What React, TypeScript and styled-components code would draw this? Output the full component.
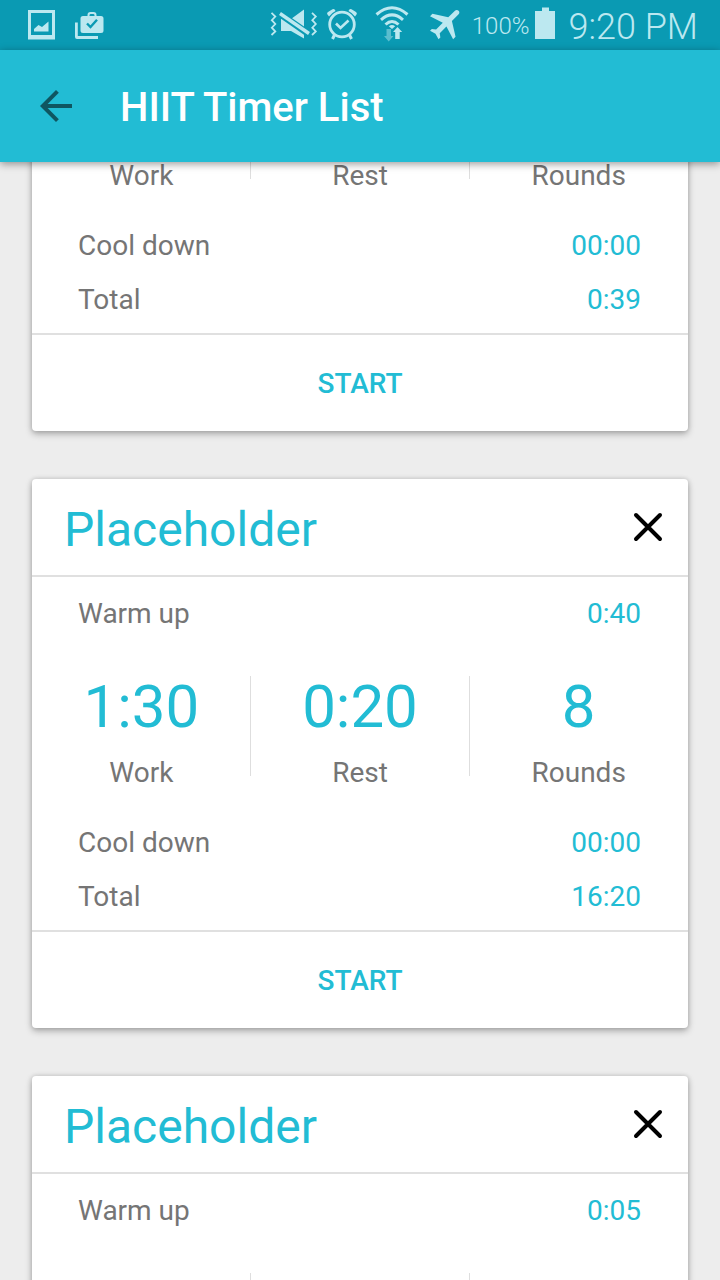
import React, { useLayoutEffect, useRef } from 'react';
import styled, { createGlobalStyle } from 'styled-components';

const accent = '#22bcd4';
const statusBg = '#0a9ab3';
const statusInk = '#bce8f0';

const GlobalStyle = createGlobalStyle`
  *, *::before, *::after { box-sizing: border-box; }
  body {
    margin: 0;
    background: #ededed;
    font-family: Roboto, "Liberation Sans", sans-serif;
  }
  h1, h2, dl, dd { margin: 0; }
  button {
    margin: 0;
    padding: 0;
    border: 0;
    background: none;
    font: inherit;
    cursor: pointer;
  }
`;

const Screen = styled.div`
  display: flex;
  flex-direction: column;
  height: 100vh;
`;

const StatusBar = styled.div`
  flex: none;
  display: flex;
  justify-content: space-between;
  height: 50px;
  padding: 0 22px 0 28px;
  background: ${statusBg};
  color: ${statusInk};
`;

const StatusGroup = styled.div<{ $gap: number }>`
  display: flex;
  align-items: center;
  gap: ${(p) => p.$gap}px;
`;

const StatusIcon = styled.svg`
  flex: none;
  display: block;
  fill: currentColor;
`;

const BatteryLevel = styled.span`
  font-size: 24px;
  font-weight: 300;
  line-height: 28px;
  padding-top: 2px;
`;

const Clock = styled.span`
  font-size: 36px;
  font-weight: 300;
  line-height: 42px;
  padding-top: 3px;
`;

const AppBar = styled.header`
  flex: none;
  display: flex;
  align-items: center;
  gap: 40px;
  height: 112px;
  padding: 0 32px;
  background: ${accent};
  box-shadow: 0 2px 8px rgba(0, 0, 0, 0.4);
  z-index: 1;
`;

const IconButton = styled.button<{ $color: string }>`
  flex: none;
  width: 48px;
  height: 48px;
  color: ${(p) => p.$color};

  svg {
    display: block;
    fill: currentColor;
  }
`;

const AppTitle = styled.h1`
  padding-top: 4px;
  color: #fff;
  font-size: 40px;
  font-weight: 500;
  line-height: 48px;
`;

const TimerList = styled.main`
  flex: 1;
  min-height: 0;
  display: flex;
  flex-direction: column;
  gap: 48px;
  padding: 32px;
  overflow-y: auto;
  scrollbar-width: none;
`;

const Card = styled.article`
  flex: none;
  border-radius: 4px;
  background: #fff;
  box-shadow: 0 3px 7px rgba(0, 0, 0, 0.28), 0 0 5px rgba(0, 0, 0, 0.14);
`;

const CardHeader = styled.div`
  display: flex;
  align-items: center;
  justify-content: space-between;
  height: 98px;
  padding: 0 16px 0 32px;
  border-bottom: 2px solid #e0e0e0;
`;

const CardTitle = styled.h2`
  padding-top: 6px;
  color: ${accent};
  font-size: 48px;
  font-weight: 400;
  line-height: 56px;
`;

const CardBody = styled.div`
  padding: 10px 0 6px;
`;

const Row = styled.dl`
  display: flex;
  justify-content: space-between;
  padding: 0 47px 0 46px;
  font-size: 28px;
  line-height: 54px;
`;

const Label = styled.dt`
  color: #757575;
`;

const Value = styled.dd`
  color: ${accent};
`;

const Stats = styled.dl`
  display: grid;
  grid-template-columns: repeat(3, 1fr);
  margin: 35px 0 27px;
  background:
    linear-gradient(#dedede, #dedede) 33.333% 0 / 1px 100px no-repeat,
    linear-gradient(#dedede, #dedede) 66.667% 0 / 1px 100px no-repeat;
`;

const Stat = styled.div`
  display: flex;
  flex-direction: column-reverse;
  align-items: center;
  gap: 19px;
  font-size: 28px;
  line-height: 32px;
`;

const StatValue = styled(Value)`
  font-size: 60px;
  line-height: 62px;
`;

const StartButton = styled.button`
  display: block;
  width: 100%;
  height: 98px;
  padding-top: 2px;
  border-top: 2px solid #e0e0e0;
  color: ${accent};
  font-size: 28px;
  font-weight: 500;
  line-height: 32px;
`;

interface Timer {
  id: number;
  name: string;
  warmUp: string;
  work: string;
  rest: string;
  rounds: string;
  coolDown: string;
  total: string;
}

const timers: Timer[] = [
  { id: 1, name: 'Placeholder', warmUp: '0:05', work: '0:10', rest: '0:07', rounds: '2', coolDown: '00:00', total: '0:39' },
  { id: 2, name: 'Placeholder', warmUp: '0:40', work: '1:30', rest: '0:20', rounds: '8', coolDown: '00:00', total: '16:20' },
  { id: 3, name: 'Placeholder', warmUp: '0:05', work: '0:20', rest: '0:10', rounds: '8', coolDown: '00:00', total: '4:05' },
];

const PhotoIcon = () => (
  <StatusIcon width="28" height="50" viewBox="0 0 28 50" aria-hidden="true">
    <path fillRule="evenodd" d="M0 10H27V39.500H0ZM3 13V35H24V13Z" />
    <path d="M6 31.500V29L10.500 25L14 27L20.500 21.500V31.500Z" />
  </StatusIcon>
);

const ShopIcon = () => (
  <StatusIcon width="30" height="50" viewBox="0 0 30 50" aria-hidden="true">
    <path d="M0 22.500H2.800V36H23V39H2Q0 39 0 37Z" />
    <path
      fillRule="evenodd"
      d="M8 16H12.500V15Q12.500 12 15.500 12H18.500Q21.500 12 21.500 15V16H26Q28.500 16 28.500 18.500V30.500Q28.500 33 26 33H8Q5.500 33 5.500 30.500V18.500Q5.500 16 8 16ZM14.500 16H19.500V15.200Q19.500 14 18.200 14H15.800Q14.500 14 14.500 15.200Z"
    />
    <path d="M12 23.500L15.500 27L22 19.800" fill="none" stroke={statusBg} strokeWidth="2.400" />
  </StatusIcon>
);

const MuteIcon = () => (
  <StatusIcon width="51" height="50" viewBox="0 0 51 50" aria-hidden="true">
    <path d="M11 19H21L34 9.500V38.500L21 31H11Z" />
    <path d="M8 12.500L41 35.500" stroke={statusBg} strokeWidth="7" />
    <path d="M10 13.500L39 33.500" stroke="currentColor" strokeWidth="3.400" />
    <g fill="none" stroke="currentColor" strokeWidth="1.800">
      <path d="M1.500 12.800L5.300 16.500L1.800 20.200L5.300 24L1.800 27.700L5.300 31.500L1.500 35" />
      <path d="M42 12.800L45.800 16.500L42.300 20.200L45.800 24L42.300 27.700L45.800 31.500L42 35" />
    </g>
  </StatusIcon>
);

const AlarmIcon = () => (
  <StatusIcon width="35" height="50" viewBox="0 0 35 50" aria-hidden="true">
    <g fill="none" stroke="currentColor">
      <circle cx="15" cy="24.500" r="12.300" strokeWidth="2.800" />
      <path d="M9 23.500L13.500 28L21.500 20.500" strokeWidth="2.600" />
      <path d="M7.500 35L5.500 39M22.500 35L24.500 39" strokeWidth="3" />
    </g>
    <path d="M0.500 14.500Q-0.500 13 1 12L5.500 9.300Q7 8.500 8 10L8.500 11Q4.500 13 2 16.500Z" />
    <path d="M29.500 14.500Q30.500 13 29 12L24.500 9.300Q23 8.500 22 10L21.500 11Q25.500 13 28 16.500Z" />
  </StatusIcon>
);

const WifiIcon = () => (
  <StatusIcon width="48" height="50" viewBox="0 0 48 50" aria-hidden="true">
    <g fill="none" stroke="currentColor" strokeWidth="3">
      <path d="M8.500 14.500Q24 1 39.500 14.500" />
      <path d="M13 19.800Q24 10 35 19.800" />
      <path d="M17.500 24.500Q24 18.500 30.500 24.500" />
    </g>
    <path d="M20.800 26.200Q24 24 27.200 26.200L24 29Z" />
    <path d="M18.500 29H23V36H25.500L20.700 41.500L16 36H18.500Z" opacity="0.450" />
    <path d="M29.500 27L34.200 32H31.700V39H27.200V32H25Z" />
  </StatusIcon>
);

const PlaneIcon = () => (
  <StatusIcon width="44" height="50" viewBox="0 0 44 50" aria-hidden="true">
    <path
      transform="translate(4.400 2.800) scale(1.720) rotate(45 12 12)"
      d="M21 16v-2l-8-5V3.500c0-.83-.67-1.500-1.500-1.500S10 2.670 10 3.500V9l-8 5v2l8-2.500V19l-2 1.500V22l3.500-1 3.500 1v-1.500L13 19v-5.500l8 2.500z"
    />
  </StatusIcon>
);

const BatteryIcon = () => (
  <StatusIcon width="27" height="50" viewBox="0 0 27 50" aria-hidden="true">
    <path d="M7 7.500H14V11H20V39H0V11H7Z" />
  </StatusIcon>
);

const BackIcon = () => (
  <svg width="48" height="48" viewBox="0 0 24 24" aria-hidden="true">
    <path d="M20 11H7.830l5.590-5.590L12 4l-8 8 8 8 1.410-1.410L7.830 13H20v-2z" />
  </svg>
);

const CloseIcon = () => (
  <svg width="48" height="48" viewBox="0 0 48 48" aria-hidden="true">
    <path d="M12 12L36 36M36 12L12 36" stroke="currentColor" strokeWidth="4" strokeLinecap="round" />
  </svg>
);

const DataRow = ({ label, value }: { label: string; value: string }) => (
  <Row>
    <Label>{label}</Label>
    <Value>{value}</Value>
  </Row>
);

const StatCell = ({ label, value }: { label: string; value: string }) => (
  <Stat>
    <Label>{label}</Label>
    <StatValue>{value}</StatValue>
  </Stat>
);

const TimerCard = ({ timer }: { timer: Timer }) => (
  <Card>
    <CardHeader>
      <CardTitle>{timer.name}</CardTitle>
      <IconButton type="button" $color="#000" aria-label="Delete timer">
        <CloseIcon />
      </IconButton>
    </CardHeader>
    <CardBody>
      <DataRow label="Warm up" value={timer.warmUp} />
      <Stats>
        <StatCell label="Work" value={timer.work} />
        <StatCell label="Rest" value={timer.rest} />
        <StatCell label="Rounds" value={timer.rounds} />
      </Stats>
      <DataRow label="Cool down" value={timer.coolDown} />
      <DataRow label="Total" value={timer.total} />
    </CardBody>
    <StartButton type="button">START</StartButton>
  </Card>
);

// The list opens part-way down the first timer.
const INITIAL_SCROLL = 312;

export default function App() {
  const listRef = useRef<HTMLElement>(null);

  useLayoutEffect(() => {
    if (listRef.current) listRef.current.scrollTop = INITIAL_SCROLL;
  }, []);

  return (
    <>
      <GlobalStyle />
      <Screen>
        <StatusBar>
          <StatusGroup $gap={19}>
            <PhotoIcon />
            <ShopIcon />
          </StatusGroup>
          <StatusGroup $gap={6}>
            <MuteIcon />
            <AlarmIcon />
            <WifiIcon />
            <PlaneIcon />
            <BatteryLevel>100%</BatteryLevel>
            <BatteryIcon />
            <Clock>9:20 PM</Clock>
          </StatusGroup>
        </StatusBar>
        <AppBar>
          <IconButton type="button" $color="rgba(0, 0, 0, 0.54)" aria-label="Back">
            <BackIcon />
          </IconButton>
          <AppTitle>HIIT Timer List</AppTitle>
        </AppBar>
        <TimerList ref={listRef}>
          {timers.map((timer) => (
            <TimerCard key={timer.id} timer={timer} />
          ))}
        </TimerList>
      </Screen>
    </>
  );
}
